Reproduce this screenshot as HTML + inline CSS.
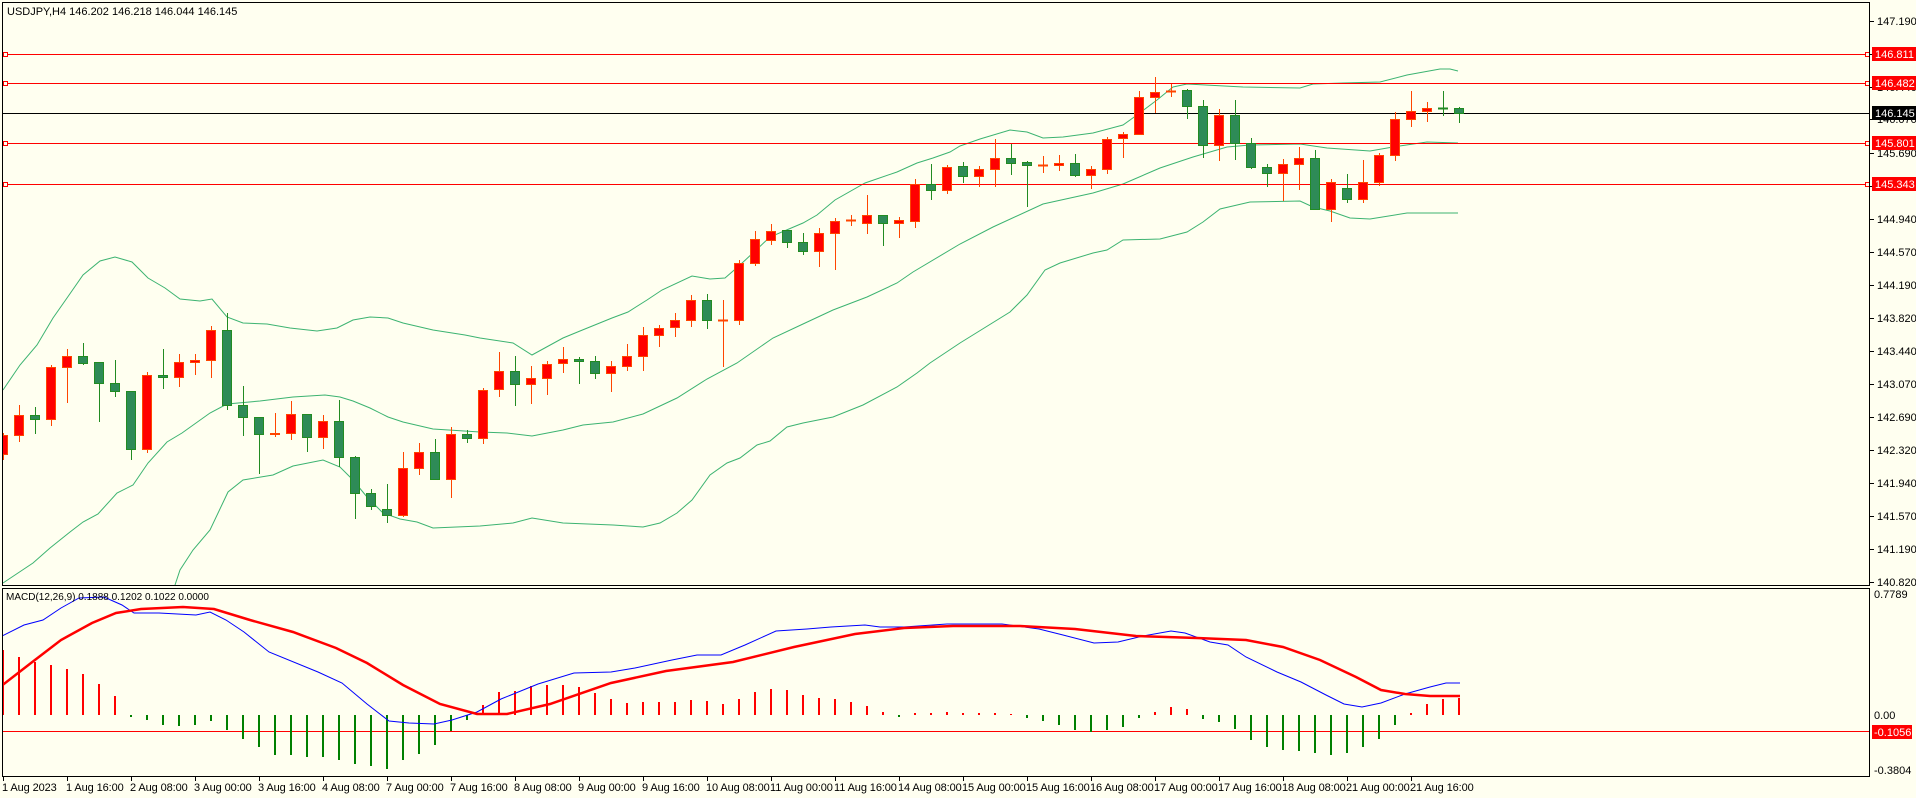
<!DOCTYPE html>
<html><head><meta charset="utf-8"><style>
html,body{margin:0;padding:0;background:#fffff0;width:1916px;height:798px;overflow:hidden}
svg{display:block}
text{font-family:"Liberation Sans",sans-serif;font-size:11px;fill:#000}
</style></head><body>
<svg width="1916" height="798" viewBox="0 0 1916 798" xmlns="http://www.w3.org/2000/svg">
<rect width="1916" height="798" fill="#fffff0"/>
<defs>
<clipPath id="mc"><rect x="2" y="2" width="1868" height="583"/></clipPath>
<clipPath id="dc"><rect x="2" y="589" width="1868" height="188"/></clipPath>
</defs>
<g clip-path="url(#mc)">
<g fill="none" stroke="#3cb371" stroke-width="1">
<polyline points="3,390 20,365 37,345 53,318 67,298 83,275 100,261 115,257 132,262 148,278 165,288 180,299 200,301 212,299 227,317 243,323 267,324 290,328 317,331 337,328 353,320 370,317 388,318 403,323 433,330 465,335 480,338 513,343 532,355 563,338 580,331 612,318 628,312 647,300 662,290 692,276 710,279 725,278 740,265 770,237 803,223 817,215 835,200 865,183 897,172 917,163 933,158 950,152 960,146 980,139 1010,130 1027,132 1043,138 1063,137 1093,133 1123,125 1137,115 1157,100 1173,87 1187,84 1243,87 1300,88 1313,84 1343,83 1380,82 1407,75 1440,69 1450,69 1458,71"/>
<polyline points="3,583 33,563 50,548 70,532 83,522 98,514 117,493 133,485 148,463 167,442 182,433 210,413 227,404 260,401 293,397 325,395 340,397 353,401 370,408 388,417 403,422 433,429 480,432 507,433 532,436 563,430 583,425 613,422 643,414 677,398 707,379 737,363 773,338 803,324 833,310 867,297 897,283 913,272 960,244 993,227 1043,204 1093,193 1123,184 1160,168 1193,157 1227,147 1250,145 1300,144 1327,148 1370,151 1393,147 1427,142 1458,143"/>
<polyline points="175,585 180,570 193,550 210,530 228,492 243,480 273,475 293,466 323,460 340,467 353,480 367,497 383,513 400,519 417,522 433,528 480,526 513,523 532,518 563,523 613,525 643,527 660,523 677,513 692,500 710,475 727,463 740,458 757,445 770,441 787,427 803,423 833,417 863,405 897,387 917,373 930,363 960,343 1010,312 1027,295 1045,270 1060,263 1093,253 1107,250 1123,240 1160,239 1187,232 1203,222 1220,209 1250,202 1300,201 1313,207 1330,211 1350,218 1370,219 1407,213 1458,213"/>
</g>
<g stroke="#ff0000" stroke-width="1">
<line x1="2" y1="54.5" x2="1870" y2="54.5"/>
<line x1="2" y1="83.5" x2="1870" y2="83.5"/>
<line x1="2" y1="143.5" x2="1870" y2="143.5"/>
<line x1="2" y1="184.5" x2="1870" y2="184.5"/>
</g>
<line x1="2" y1="113.5" x2="1870" y2="113.5" stroke="#000" stroke-width="1"/>
<g fill="#fffff0" stroke="#ff0000">
<rect x="3.5" y="52.5" width="4" height="4"/><rect x="3.5" y="81.5" width="4" height="4"/><rect x="3.5" y="141.5" width="4" height="4"/><rect x="3.5" y="182.5" width="4" height="4"/>
<rect x="1865.5" y="52.5" width="4" height="4"/><rect x="1865.5" y="81.5" width="4" height="4"/><rect x="1865.5" y="141.5" width="4" height="4"/><rect x="1865.5" y="182.5" width="4" height="4"/>
</g>
<path stroke="#ff4500" stroke-width="1" fill="none" d="M3.5 433V460M19.5 405V442M51.5 365V426M67.5 349V403M147.5 372V453M179.5 354V387M195.5 354V375M211.5 326V378M275.5 413V437M291.5 401V440M323.5 415V449M403.5 452V517M419.5 443V475M451.5 427V498M483.5 388V444M499.5 352V397M531.5 366V404M547.5 361V395M563.5 347V373M611.5 361V392M627.5 344V371M643.5 327V371M659.5 325V347M675.5 313V337M691.5 295V327M723.5 300V367M739.5 260V325M755.5 231V266M771.5 224V245M819.5 228V267M835.5 218V270M851.5 215V226M867.5 195V234M899.5 217V238M915.5 179V228M947.5 165V194M979.5 166V187M995.5 139V187M1043.5 156V173M1059.5 155V171M1091.5 166V189M1107.5 137V174M1123.5 132V158M1139.5 91V134M1155.5 77V113M1171.5 84V97M1219.5 109V161M1283.5 159V201M1299.5 147V190M1331.5 179V222M1363.5 160V203M1379.5 153V186M1395.5 112V161M1411.5 91V127M1427.5 102V122"/>
<g fill="#ff0000" stroke="#ff4500" stroke-width="1">
<rect x="-1.5" y="435.5" width="9" height="19"/>
<rect x="14.5" y="415.5" width="9" height="20"/>
<rect x="46.5" y="367.5" width="9" height="52"/>
<rect x="62.5" y="356.5" width="9" height="11"/>
<rect x="142.5" y="375.5" width="9" height="74"/>
<rect x="174.5" y="362.5" width="9" height="15"/>
<rect x="190.5" y="360.5" width="9" height="2"/>
<rect x="206.5" y="330.5" width="9" height="30"/>
<rect x="270.5" y="433.5" width="9" height="1"/>
<rect x="286.5" y="414.5" width="9" height="19"/>
<rect x="318.5" y="421.5" width="9" height="16"/>
<rect x="398.5" y="468.5" width="9" height="47"/>
<rect x="414.5" y="452.5" width="9" height="16"/>
<rect x="446.5" y="434.5" width="9" height="45"/>
<rect x="478.5" y="390.5" width="9" height="48"/>
<rect x="494.5" y="371.5" width="9" height="18"/>
<rect x="526.5" y="378.5" width="9" height="6"/>
<rect x="542.5" y="364.5" width="9" height="14"/>
<rect x="558.5" y="359.5" width="9" height="4"/>
<rect x="606.5" y="366.5" width="9" height="7"/>
<rect x="622.5" y="356.5" width="9" height="10"/>
<rect x="638.5" y="335.5" width="9" height="21"/>
<rect x="654.5" y="328.5" width="9" height="7"/>
<rect x="670.5" y="320.5" width="9" height="7"/>
<rect x="686.5" y="300.5" width="9" height="20"/>
<rect x="718.5" y="320" width="9" height="1"/>
<rect x="734.5" y="263.5" width="9" height="57"/>
<rect x="750.5" y="239.5" width="9" height="24"/>
<rect x="766.5" y="231.5" width="9" height="9"/>
<rect x="814.5" y="233.5" width="9" height="18"/>
<rect x="830.5" y="221.5" width="9" height="12"/>
<rect x="846.5" y="220" width="9" height="1"/>
<rect x="862.5" y="215.5" width="9" height="8"/>
<rect x="894.5" y="220.5" width="9" height="3"/>
<rect x="910.5" y="184.5" width="9" height="37"/>
<rect x="942.5" y="167.5" width="9" height="23"/>
<rect x="974.5" y="169.5" width="9" height="7"/>
<rect x="990.5" y="158.5" width="9" height="11"/>
<rect x="1038.5" y="165" width="9" height="1"/>
<rect x="1054.5" y="163.5" width="9" height="2"/>
<rect x="1086.5" y="169.5" width="9" height="6"/>
<rect x="1102.5" y="139.5" width="9" height="30"/>
<rect x="1118.5" y="134.5" width="9" height="4"/>
<rect x="1134.5" y="97.5" width="9" height="37"/>
<rect x="1150.5" y="92.5" width="9" height="5"/>
<rect x="1166.5" y="91" width="9" height="1"/>
<rect x="1214.5" y="115.5" width="9" height="30"/>
<rect x="1278.5" y="164.5" width="9" height="9"/>
<rect x="1294.5" y="158.5" width="9" height="6"/>
<rect x="1326.5" y="182.5" width="9" height="27"/>
<rect x="1358.5" y="182.5" width="9" height="17"/>
<rect x="1374.5" y="155.5" width="9" height="27"/>
<rect x="1390.5" y="119.5" width="9" height="36"/>
<rect x="1406.5" y="111.5" width="9" height="8"/>
<rect x="1422.5" y="108.5" width="9" height="3"/>
</g>
<path stroke="#228b22" stroke-width="1" fill="none" d="M35.5 407V434M83.5 343V365M99.5 362V422M115.5 360V397M131.5 391V460M163.5 349V389M227.5 313V410M243.5 386V436M259.5 417V474M307.5 414V452M339.5 400V467M355.5 456V519M371.5 489V510M387.5 484V523M435.5 439V480M467.5 430V443M515.5 356V406M579.5 357V384M595.5 356V379M707.5 294V329M787.5 230V248M803.5 233V255M883.5 215V246M931.5 164V200M963.5 162V183M1011.5 144V175M1027.5 161V207M1075.5 154V177M1187.5 89V119M1203.5 100V158M1235.5 100V160M1251.5 138V169M1267.5 164V187M1315.5 150V209M1347.5 174V203M1443.5 91V116M1459.5 107V123"/>
<g fill="#2e8b57" stroke="#228b22" stroke-width="1">
<rect x="30.5" y="415.5" width="9" height="4"/>
<rect x="78.5" y="356.5" width="9" height="7"/>
<rect x="94.5" y="362.5" width="9" height="21"/>
<rect x="110.5" y="383.5" width="9" height="8"/>
<rect x="126.5" y="391.5" width="9" height="58"/>
<rect x="158.5" y="375.5" width="9" height="2"/>
<rect x="222.5" y="330.5" width="9" height="75"/>
<rect x="238.5" y="405.5" width="9" height="12"/>
<rect x="254.5" y="417.5" width="9" height="17"/>
<rect x="302.5" y="414.5" width="9" height="23"/>
<rect x="334.5" y="421.5" width="9" height="36"/>
<rect x="350.5" y="457.5" width="9" height="36"/>
<rect x="366.5" y="493.5" width="9" height="13"/>
<rect x="382.5" y="509.5" width="9" height="6"/>
<rect x="430.5" y="452.5" width="9" height="27"/>
<rect x="462.5" y="434.5" width="9" height="4"/>
<rect x="510.5" y="371.5" width="9" height="13"/>
<rect x="574.5" y="359.5" width="9" height="2"/>
<rect x="590.5" y="361.5" width="9" height="12"/>
<rect x="702.5" y="300.5" width="9" height="20"/>
<rect x="782.5" y="230.5" width="9" height="12"/>
<rect x="798.5" y="242.5" width="9" height="9"/>
<rect x="878.5" y="215.5" width="9" height="8"/>
<rect x="926.5" y="184.5" width="9" height="6"/>
<rect x="958.5" y="166.5" width="9" height="10"/>
<rect x="1006.5" y="158.5" width="9" height="5"/>
<rect x="1022.5" y="162.5" width="9" height="3"/>
<rect x="1070.5" y="163.5" width="9" height="12"/>
<rect x="1182.5" y="90.5" width="9" height="16"/>
<rect x="1198.5" y="106.5" width="9" height="39"/>
<rect x="1230.5" y="115.5" width="9" height="28"/>
<rect x="1246.5" y="143.5" width="9" height="24"/>
<rect x="1262.5" y="167.5" width="9" height="6"/>
<rect x="1310.5" y="158.5" width="9" height="51"/>
<rect x="1342.5" y="188.5" width="9" height="11"/>
<rect x="1438.5" y="108" width="9" height="1"/>
<rect x="1454.5" y="108.5" width="9" height="5"/>
</g>
</g>
<g clip-path="url(#dc)">
<line x1="2" y1="731.5" x2="1870" y2="731.5" stroke="#ff0000" stroke-width="1"/>
<path stroke="#ff0000" stroke-width="2" fill="none" d="M3 715V650M19 715V657M35 715V662M51 715V665M67 715V669M83 715V674M99 715V684M115 715V696M483 715V705M499 715V692M515 715V691M531 715V686M547 715V685M563 715V685M579 715V687M595 715V693M611 715V699M627 715V703M643 715V702M659 715V702M675 715V702M691 715V700M707 715V701M723 715V704M739 715V699M755 715V692M771 715V689M787 715V690M803 715V695M819 715V698M835 715V699M851 715V702M867 715V706M883 715V712M915 715V713M931 715V713M947 715V712M963 715V713M979 715V713M995 715V713M1011 715V714M1155 715V712M1171 715V707M1187 715V709M1411 715V713M1427 715V704M1443 715V699M1459 715V698"/>
<path stroke="#008000" stroke-width="2" fill="none" d="M131 715V717M147 715V720M163 715V725M179 715V726M195 715V725M211 715V721M227 715V730M243 715V739M259 715V747M275 715V755M291 715V755M307 715V757M323 715V757M339 715V760M355 715V764M371 715V766M387 715V769M403 715V760M419 715V754M435 715V745M451 715V731M467 715V720M899 715V717M1027 715V718M1043 715V721M1059 715V725M1075 715V730M1091 715V732M1107 715V730M1123 715V727M1139 715V718M1203 715V719M1219 715V722M1235 715V729M1251 715V740M1267 715V747M1283 715V750M1299 715V751M1315 715V753M1331 715V755M1347 715V753M1363 715V747M1379 715V739M1395 715V725"/>
<polyline fill="none" stroke="#0000ff" stroke-width="1" points="0,637 24,625 43,620 61,608 79,598 104,597 122,605 134,613 159,613 196,615 210,612 226,620 244,632 269,652 318,672 342,683 367,704 389,721 409,723 434,724 452,720 477,712 501,699 538,684 574,673 611,672 635,668 672,660 697,655 721,655 745,645 776,631 807,629 831,627 865,625 880,627 904,627 947,624 1002,624 1039,629 1063,635 1094,643 1118,642 1143,636 1171,631 1185,633 1210,642 1228,645 1246,657 1277,672 1301,682 1326,695 1344,704 1362,707 1381,703 1405,694 1430,687 1446,683 1460,683"/>
<polyline fill="none" stroke="#ff0000" stroke-width="2.5" points="0,687 31,663 61,640 92,623 116,613 141,609 183,607 214,609 250,620 293,632 336,648 367,663 403,685 440,704 477,714 507,714 550,704 611,683 666,671 733,662 794,647 855,634 904,628 953,626 1020,626 1075,629 1136,636 1197,638 1246,640 1283,647 1320,660 1356,677 1381,690 1405,694 1430,696 1460,696"/>
</g>
<g stroke="#000" stroke-width="1" fill="none">
<rect x="2.5" y="2.5" width="1867" height="583"/>
<rect x="2.5" y="588.5" width="1867" height="188"/>
</g>
<text x="7" y="15">USDJPY,H4  146.202 146.218 146.044 146.145</text>
<text x="6" y="600" style="font-size:10px">MACD(12,26,9) 0.1888 0.1202 0.1022 0.0000</text>
<g stroke="#000" stroke-width="1">
<path d="M1870 21.5h4M1870 54.5h4M1870 87.5h4M1870 119.5h4M1870 153.5h4M1870 186.5h4M1870 219.5h4M1870 252.5h4M1870 285.5h4M1870 318.5h4M1870 351.5h4M1870 384.5h4M1870 417.5h4M1870 450.5h4M1870 483.5h4M1870 516.5h4M1870 549.5h4M1870 582.5h4"/>
</g>
<g>
<text x="1877" y="25">147.190</text>
<text x="1877" y="91">146.440</text>
<text x="1877" y="123">146.070</text>
<text x="1877" y="157">145.690</text>
<text x="1877" y="190">145.310</text>
<text x="1877" y="223">144.940</text>
<text x="1877" y="256">144.570</text>
<text x="1877" y="289">144.190</text>
<text x="1877" y="322">143.820</text>
<text x="1877" y="355">143.440</text>
<text x="1877" y="388">143.070</text>
<text x="1877" y="421">142.690</text>
<text x="1877" y="454">142.320</text>
<text x="1877" y="487">141.940</text>
<text x="1877" y="520">141.570</text>
<text x="1877" y="553">141.190</text>
<text x="1877" y="586">140.820</text>
</g>
<rect x="1872" y="47" width="44" height="14" fill="#ff0000"/><text x="1875" y="58" style="fill:#fff">146.811</text>
<rect x="1872" y="76" width="44" height="14" fill="#ff0000"/><text x="1875" y="87" style="fill:#fff">146.482</text>
<rect x="1872" y="106" width="44" height="14" fill="#000"/><text x="1875" y="117" style="fill:#fff">146.145</text>
<rect x="1872" y="136" width="44" height="14" fill="#ff0000"/><text x="1875" y="147" style="fill:#fff">145.801</text>
<rect x="1872" y="177" width="44" height="14" fill="#ff0000"/><text x="1875" y="188" style="fill:#fff">145.343</text>
<text x="1874" y="598">0.7789</text>
<text x="1874" y="719">0.00</text>
<rect x="1872" y="725" width="40" height="14" fill="#ff0000"/><text x="1874" y="736" style="fill:#fff">-0.1056</text>
<text x="1874" y="774">-0.3804</text>
<path stroke="#000" d="M3.5 777v4M67.5 777v4M131.5 777v4M195.5 777v4M259.5 777v4M323.5 777v4M387.5 777v4M451.5 777v4M515.5 777v4M579.5 777v4M643.5 777v4M707.5 777v4M771.5 777v4M835.5 777v4M899.5 777v4M963.5 777v4M1027.5 777v4M1091.5 777v4M1155.5 777v4M1219.5 777v4M1283.5 777v4M1347.5 777v4M1411.5 777v4"/>
<g style="font-size:9.5px;letter-spacing:-0.1px">
<text x="2" y="791">1 Aug 2023</text>
<text x="66" y="791">1 Aug 16:00</text>
<text x="130" y="791">2 Aug 08:00</text>
<text x="194" y="791">3 Aug 00:00</text>
<text x="258" y="791">3 Aug 16:00</text>
<text x="322" y="791">4 Aug 08:00</text>
<text x="386" y="791">7 Aug 00:00</text>
<text x="450" y="791">7 Aug 16:00</text>
<text x="514" y="791">8 Aug 08:00</text>
<text x="578" y="791">9 Aug 00:00</text>
<text x="642" y="791">9 Aug 16:00</text>
<text x="706" y="791">10 Aug 08:00</text>
<text x="770" y="791">11 Aug 00:00</text>
<text x="834" y="791">11 Aug 16:00</text>
<text x="898" y="791">14 Aug 08:00</text>
<text x="962" y="791">15 Aug 00:00</text>
<text x="1026" y="791">15 Aug 16:00</text>
<text x="1090" y="791">16 Aug 08:00</text>
<text x="1154" y="791">17 Aug 00:00</text>
<text x="1218" y="791">17 Aug 16:00</text>
<text x="1282" y="791">18 Aug 08:00</text>
<text x="1346" y="791">21 Aug 00:00</text>
<text x="1410" y="791">21 Aug 16:00</text>
</g>
</svg>
</body></html>
